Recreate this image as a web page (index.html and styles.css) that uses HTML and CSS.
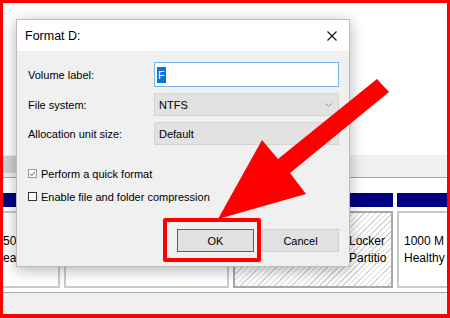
FILE: index.html
```html
<!DOCTYPE html>
<html lang="en">
<head>
  <meta charset="UTF-8" />
  <meta name="viewport" content="width=device-width, initial-scale=1.0" />
  <title>Format D:</title>
  <link rel="stylesheet" href="styles.css">
</head>
<body>
  <div class="stage">
    <div class="disk-mgmt">
      <div class="volume-list"></div>
      <div class="hscroll"><div class="hscroll-thumb"></div></div>
      <div class="graph-view">
        <div class="partitions">
          <div class="partition p-recovery">
            <div class="partition-bar"></div>
            <div class="partition-body">
              <div class="partition-box"><span>50</span><span>ea</span></div>
            </div>
          </div>
          <div class="partition p-system">
            <div class="partition-bar"></div>
            <div class="partition-body">
              <div class="partition-box"></div>
            </div>
          </div>
          <div class="partition p-locker">
            <div class="partition-bar"></div>
            <div class="partition-body">
              <div class="partition-box hatched shifted"><span>Locker</span><span>Partitio</span></div>
            </div>
          </div>
          <div class="partition p-last">
            <div class="partition-bar"></div>
            <div class="partition-body">
              <div class="partition-box"><span>1000 M</span><span>Healthy</span></div>
            </div>
          </div>
        </div>
      </div>
      <div class="status-bar"></div>
    </div>

    <div class="dialog">
      <div class="dialog-title">
        <span>Format D:</span>
        <svg class="dialog-close" viewBox="0 0 10 10">
          <path d="M0.5 0.5 L9.5 9.5 M9.5 0.5 L0.5 9.5" stroke="#111" stroke-width="1.1" fill="none" />
        </svg>
      </div>
      <div class="dialog-body">
        <div class="field-grid">
          <label>Volume label:</label>
          <div class="text-field"><span class="selected">F</span></div>

          <label>File system:</label>
          <div class="combo">
            <span>NTFS</span>
            <svg class="chevron" viewBox="0 0 7 4">
              <polyline points="0.5,0.5 3.5,3.5 6.5,0.5" stroke="#8a8a8a" stroke-width="1" fill="none" />
            </svg>
          </div>

          <label>Allocation unit size:</label>
          <div class="combo"><span>Default</span></div>
        </div>

        <div class="options">
          <div class="option">
            <span class="checkbox checked">
              <svg viewBox="0 0 7 7"><polyline points="1,3.6 2.8,5.4 6,1.6" stroke="#8c8c8c" stroke-width="1.1" fill="none" /></svg>
            </span>
            <span>Perform a quick format</span>
          </div>
          <div class="option">
            <span class="checkbox"></span>
            <span>Enable file and folder compression</span>
          </div>
        </div>

        <div class="buttons">
          <button class="btn btn-default">OK</button>
          <button class="btn">Cancel</button>
        </div>
      </div>
    </div>

    <div class="callout-box"></div>
    <svg class="callout-arrow" viewBox="0 0 450 318">
      <polygon points="218,219 262,140 278,159 377,79 389,92 290,173 306,194" fill="#ff0000" />
    </svg>
  </div>
</body>
</html>
```

FILE: styles.css
```css
body {
  margin: 0;
  font-family: "Liberation Sans", Arial, sans-serif;
  color: #000;
}

.stage {
  position: relative;
  width: 450px;
  height: 318px;
  overflow: hidden;
  background: #fff;
}

/* red frame drawn over the screenshot */
.stage::after {
  content: "";
  position: absolute;
  inset: 0;
  border: 3px solid #ff0000;
  border-bottom-width: 4px;
  pointer-events: none;
}

/* Disk Management window behind the dialog */
.disk-mgmt {
  display: flex;
  flex-direction: column;
  height: 100%;
}

.volume-list {
  height: 155px;
  background: #fff;
}

.hscroll {
  height: 22px;
  background: #f0f0f0;
  border-bottom: 1px solid #a6a6a6;
}

.hscroll-thumb {
  width: 200px;
  height: 17px;
  margin-top: 1px;
  background: #d2d2d2;
}

.graph-view {
  padding-top: 15px;
  background: #fff;
}

.partitions {
  display: flex;
  gap: 4px;
  margin-left: -4px;
}

.partition {
  flex: none;
  display: flex;
  flex-direction: column;
}

.p-recovery { width: 64px; }
.p-system { width: 165px; }
.p-locker { width: 160px; }
.p-last { width: 90px; }

.partition-bar {
  height: 14px;
  background: #000080;
}

.partition-body {
  padding: 4px 0;
}

.partition-box {
  height: 77px;
  box-sizing: border-box;
  border: 2px solid #cacaca;
  padding-left: 5px;
  display: flex;
  flex-direction: column;
  justify-content: center;
  overflow: hidden;
  white-space: nowrap;
  font-size: 12px;
  line-height: 17px;
}

.partition-box.hatched {
  border-color: #a8a8a8;
  background: repeating-linear-gradient(135deg, #fff 0 3px, #d6d6d6 3px 4px);
}

.partition-box.shifted {
  padding-left: 114px;
}

.status-bar {
  flex: 1;
  background: #f0f0f0;
  border-top: 1px solid #a6a6a6;
}

/* Format dialog */
.dialog {
  position: absolute;
  left: 16px;
  top: 19px;
  width: 334px;
  box-sizing: border-box;
  border: 1px solid #bdbdbd;
  background: #f0f0f0;
  box-shadow: 0 3px 14px rgba(0, 0, 0, 0.3);
  font-size: 11px;
}

.dialog-title {
  height: 31px;
  background: #fff;
  display: flex;
  align-items: center;
  justify-content: space-between;
  padding-left: 8px;
  font-size: 12.5px;
}

.dialog-close {
  width: 10px;
  height: 10px;
  margin-right: 12px;
}

.dialog-body {
  padding: 11px 10px 14px 11px;
}

.field-grid {
  display: grid;
  grid-template-columns: 126px 1fr;
  row-gap: 6px;
  align-items: center;
}

.text-field {
  height: 25px;
  box-sizing: border-box;
  border: 1px solid #7ab3e8;
  background: #fff;
  padding: 0 2px;
  display: flex;
  align-items: center;
}

.text-field .selected {
  background: #0a74d6;
  color: #fff;
  padding: 1px 1px;
  line-height: 14px;
}

.combo {
  height: 23px;
  box-sizing: border-box;
  border: 1px solid #d4d4d4;
  background: #e2e2e2;
  padding: 0 6px 0 4px;
  display: flex;
  align-items: center;
  justify-content: space-between;
}

.chevron {
  width: 7px;
  height: 4px;
}

.options {
  margin-top: 17px;
}

.option {
  height: 23px;
  display: flex;
  align-items: center;
  gap: 4px;
}

.checkbox {
  width: 9px;
  height: 9px;
  box-sizing: border-box;
  border: 1px solid #333;
  background: #fff;
  display: flex;
}

.checkbox.checked {
  border-color: #9a9a9a;
}

.checkbox svg {
  width: 7px;
  height: 7px;
}

.buttons {
  margin-top: 21px;
  display: flex;
  justify-content: flex-end;
  gap: 8px;
}

.btn {
  width: 77px;
  height: 23px;
  box-sizing: border-box;
  border: 1px solid #d0d0d0;
  background: #e1e1e1;
  font: inherit;
  color: #000;
  padding: 0;
}

.btn-default {
  border-color: #0078d7;
}

/* annotation overlays */
.callout-box {
  position: absolute;
  left: 163px;
  top: 218px;
  width: 98px;
  height: 44px;
  box-sizing: border-box;
  border: 4px solid #ff0000;
  border-radius: 2px;
}

.callout-arrow {
  position: absolute;
  left: 0;
  top: 0;
  width: 450px;
  height: 318px;
}
```
